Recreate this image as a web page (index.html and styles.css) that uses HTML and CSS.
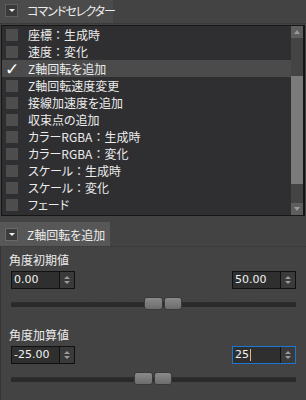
FILE: index.html
```html
<!DOCTYPE html>
<html lang="ja">
<head>
<meta charset="utf-8">
<link rel="stylesheet" href="styles.css">
</head>
<body>
<div class="app">
  <div class="head">
    <div class="tab tab1"><span class="dd"><span class="tri"></span></span><span class="tab-label">コマンドセレクター</span></div>
  </div>
  <div class="list">
    <div class="rows">
      <div class="row"><span class="cb"></span><span>座標<span class="fw">：</span>生成時</span></div>
      <div class="row"><span class="cb"></span><span>速度<span class="fw">：</span>変化</span></div>
      <div class="row sel"><span class="chk">✓</span><span>Z軸回転を追加</span></div>
      <div class="row"><span class="cb"></span><span>Z軸回転速度変更</span></div>
      <div class="row"><span class="cb"></span><span>接線加速度を追加</span></div>
      <div class="row"><span class="cb"></span><span>収束点の追加</span></div>
      <div class="row"><span class="cb"></span><span>カラーRGBA<span class="fw">：</span>生成時</span></div>
      <div class="row"><span class="cb"></span><span>カラーRGBA<span class="fw">：</span>変化</span></div>
      <div class="row"><span class="cb"></span><span>スケール<span class="fw">：</span>生成時</span></div>
      <div class="row"><span class="cb"></span><span>スケール<span class="fw">：</span>変化</span></div>
      <div class="row"><span class="cb"></span><span>フェード</span></div>
    </div>
    <div class="sbar">
      <div class="sbtn up"><span></span></div>
      <div class="strack"><div class="sthumb"></div></div>
      <div class="sbtn down"><span></span></div>
    </div>
  </div>
  <div class="head head2">
    <div class="tab tab2"><span class="dd"><span class="tri"></span></span><span class="tab-label">Z軸回転を追加</span></div>
  </div>
  <div class="panel">
    <div class="lbl">角度初期値</div>
    <div class="inputs">
      <div class="num"><span class="val">0.00</span><span class="spin"><i class="su"></i><i class="sd"></i></span></div>
      <div class="num"><span class="val">50.00</span><span class="spin"><i class="su"></i><i class="sd"></i></span></div>
    </div>
    <div class="slider"><div class="knob" style="left:133px"><span></span><span></span></div></div>
    <div class="lbl lbl2">角度加算値</div>
    <div class="inputs">
      <div class="num"><span class="val">-25.00</span><span class="spin"><i class="su"></i><i class="sd"></i></span></div>
      <div class="num focus"><span class="val">25<span class="caret"></span></span><span class="spin"><i class="su"></i><i class="sd"></i></span></div>
    </div>
    <div class="slider"><div class="knob" style="left:123px"><span></span><span></span></div></div>
  </div>
</div>
</body>
</html>
```

FILE: styles.css
```css
html, body {
  margin: 0;
  padding: 0;
  background: #434343;
}
.app {
  width: 306px;
  height: 400px;
  overflow: hidden;
  font-family: "Noto Sans CJK JP", "Noto Sans", sans-serif;
  font-size: 12px;
  color: #ececec;
  font-feature-settings: "palt";
}
.fw { font-feature-settings: normal; }
.head {
  height: 24px;
  display: flex;
  align-items: stretch;
  border-bottom: 1px dotted #333;
  box-sizing: border-box;
}
.tab {
  display: flex;
  align-items: center;
  background: #4b4b4b;
  box-sizing: border-box;
}
.tab1 { width: 113px; padding-bottom: 2px; }
.tab1 .tab-label { letter-spacing: -1px; }
.dd {
  width: 13px;
  height: 13px;
  margin-left: 5px;
  margin-right: 9px;
  background: #3a3a3a;
  border: 1px solid #5e5e5e;
  box-sizing: border-box;
  display: flex;
  align-items: center;
  justify-content: center;
  flex: none;
}
.tri {
  width: 0;
  height: 0;
  border-left: 3px solid transparent;
  border-right: 3px solid transparent;
  border-top: 3px solid #f0f0f0;
}
.tab-label { white-space: nowrap; line-height: 14px; }

.list {
  margin: 1px 1px 0 1px;
  height: 191px;
  border: 1px solid #161616;
  border-right-width: 2px;
  background: #2f2f31;
  display: flex;
  box-sizing: border-box;
}
.rows {
  flex: 1;
  overflow: hidden;
}
.row {
  height: 17px;
  display: flex;
  align-items: center;
  white-space: nowrap;
  line-height: 14px;
}
.row.sel { background: #4b4b4b; }
.cb {
  width: 12px;
  height: 12px;
  margin-left: 4px;
  margin-right: 10px;
  background:
    radial-gradient(circle, #555 0.6px, transparent 0.8px) 0 0 / 2px 2px,
    #474747;
  flex: none;
}
.chk {
  width: 16px;
  margin-left: 3px;
  margin-right: 7px;
  font-size: 17px;
  font-weight: bold;
  line-height: 14px;
  color: #fff;
  font-family: "DejaVu Sans", sans-serif;
}
.sbar {
  width: 12px;
  display: flex;
  flex-direction: column;
  background: #444;
}
.sbtn {
  height: 12px;
  background: #5e5e5e;
  display: flex;
  align-items: center;
  justify-content: center;
}
.sbtn span {
  width: 0;
  height: 0;
  border-left: 3px solid transparent;
  border-right: 3px solid transparent;
}
.sbtn.up span { border-bottom: 4px solid #9a9a9a; }
.sbtn.down span { border-top: 4px solid #9a9a9a; }
.strack {
  flex: 1;
  padding-top: 38px;
  padding-bottom: 19px;
  display: flex;
}
.sthumb {
  flex: 1;
  background: #7b7b7b;
}

.head2 {
  margin-top: 6px;
  height: 25px;
  border-bottom: 1px dotted #353535;
}
.tab2 { width: 110px; background: #575757; padding-top: 1px; }
.tab2 .dd { background: #3c3c3c; border-color: #6a6a6a; }

.panel {
  padding: 6px 10px 0 8px;
  border-left: 1px solid #333;
  height: 160px;
}
.lbl {
  line-height: 14px;
  height: 14px;
  margin-bottom: 4px;
}
.lbl2 { margin-top: 17px; }
.inputs {
  display: flex;
  justify-content: space-between;
  padding-left: 2px;
}
.num {
  width: 64px;
  height: 18px;
  box-sizing: border-box;
  border: 1px solid #111;
  background: #2f2f2f;
  display: flex;
}
.num.focus { border-color: #1e78d2; }
.val {
  flex: 1;
  padding-left: 2px;
  line-height: 16px;
  font-family: "DejaVu Sans", sans-serif;
  font-size: 11px;
  color: #f2f2f2;
  display: flex;
  align-items: center;
}
.caret {
  width: 1px;
  height: 12px;
  background: #d9b98a;
  margin-left: 1px;
}
.spin {
  width: 14px;
  border-left: 1px solid #111;
  background: #3a3a3a;
  display: flex;
  flex-direction: column;
  align-items: center;
  justify-content: center;
  gap: 2px;
}
.spin i {
  width: 0;
  height: 0;
  border-left: 3px solid transparent;
  border-right: 3px solid transparent;
}
.spin .su { border-bottom: 3px solid #9a9a9a; }
.spin .sd { border-top: 3px solid #9a9a9a; }

.slider {
  position: relative;
  height: 14px;
  margin: 8px 0 0 2px;
}
.slider::before {
  content: "";
  position: absolute;
  left: 0;
  right: 0;
  top: 5px;
  height: 4px;
  background: #2a2a2b;
  border-top: 1px dotted #333;
}
.knob {
  position: absolute;
  top: 0;
  width: 38px;
  height: 13px;
  display: flex;
  gap: 1px;
}
.knob span {
  flex: 1;
  background: linear-gradient(#8a8a8a, #6c6c6c);
  border: 1px solid #3a3a3a;
  border-radius: 3px;
}
```
